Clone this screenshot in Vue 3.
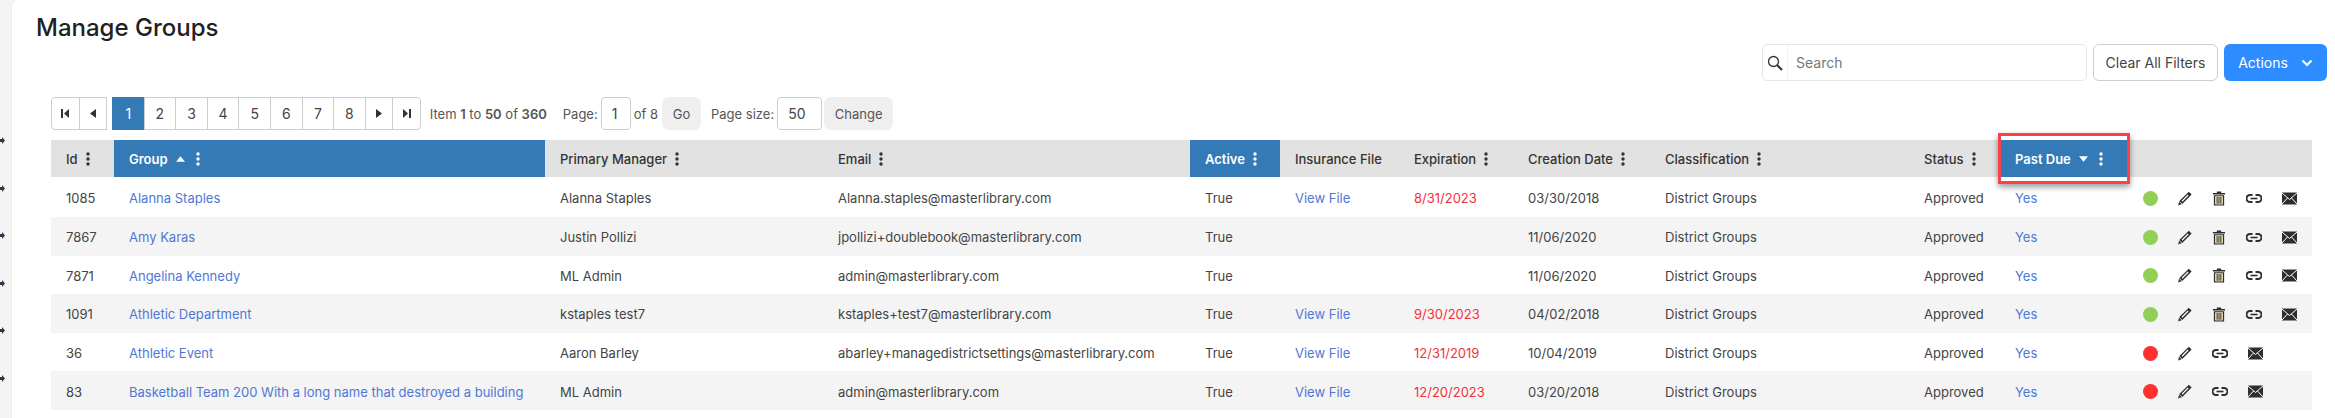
<template>
  <div class="page">
    <div class="rail">
      <svg v-for="n in 6" :key="n" class="rail-mark" viewBox="0 0 5 7"><path d="M0 2h2V0l3 3.500L2 7V5H0z" /></svg>
    </div>
    <div class="card">
      <h1>Manage Groups</h1>
      <div class="toolbar">
        <div class="search">
          <span class="search-icon">
            <svg width="16" height="16" viewBox="0 0 16 16" fill="none" stroke="#333" stroke-width="1.3">
              <circle cx="6.500" cy="6.500" r="5" />
              <path d="M10.200 10.200L15 15" stroke-width="2" />
            </svg>
          </span>
          <input class="search-input" placeholder="Search" />
        </div>
        <button class="btn-clear">Clear All Filters</button>
        <button class="btn-actions">
          Actions
          <svg width="12" height="8" viewBox="0 0 12 8" fill="none" stroke="#fff" stroke-width="2.200"><path d="M1.500 1.500L6 6l4.500-4.500" /></svg>
        </button>
      </div>
      <div class="content">
        <div class="pager">
          <div class="pager-group nav-start">
            <a class="pg nav">
              <svg width="8" height="9" viewBox="0 0 8 9"><path d="M0 0h2v9H0zM8 0v9L3 4.500z" /></svg>
            </a>
            <a class="pg nav">
              <svg width="6" height="9" viewBox="0 0 6 9"><path d="M6 0v9L0 4.500z" /></svg>
            </a>
          </div>
          <div class="pager-group nav-end">
            <a v-for="p in 8" :key="p" class="pg num" :class="{ on: p === 1 }">{{ p }}</a>
            <a class="pg nav">
              <svg width="6" height="9" viewBox="0 0 6 9"><path d="M0 0v9l6-4.500z" /></svg>
            </a>
            <a class="pg nav">
              <svg width="8" height="9" viewBox="0 0 8 9"><path d="M0 0v9l5-4.500zM6 0h2v9H6z" /></svg>
            </a>
          </div>
          <span class="info">Item <b>1</b> to <b>50</b> of <b>360</b></span>
          <span class="page-label">Page:</span>
          <input class="box box-page" value="1" />
          <span class="of">of 8</span>
          <button class="btn-soft btn-go">Go</button>
          <span class="size-label">Page size:</span>
          <input class="box box-size" value="50" />
          <button class="btn-soft btn-change">Change</button>
        </div>

        <div class="table">
          <div class="row head">
            <div v-for="c in columns" :key="c.label" class="cell" :class="{ sorted: c.sorted }">
              <span>{{ c.label }}</span>
              <svg v-if="c.sort === 'up'" class="sort" width="9" height="6" viewBox="0 0 10 6"><path d="M5 0l5 6H0z" /></svg>
              <svg v-if="c.sort === 'down'" class="sort" width="9" height="6" viewBox="0 0 10 6"><path d="M0 0h10L5 6z" /></svg>
              <svg v-if="c.menu" class="kebab" width="4" height="14" viewBox="0 0 4 14">
                <circle cx="2" cy="2" r="1.700" /><circle cx="2" cy="7" r="1.700" /><circle cx="2" cy="12" r="1.700" />
              </svg>
            </div>
            <div class="cell"></div>
          </div>
          <div v-for="r in rows" :key="r.id" class="row body">
            <div class="cell">{{ r.id }}</div>
            <div class="cell"><a class="link">{{ r.group }}</a></div>
            <div class="cell">{{ r.manager }}</div>
            <div class="cell">{{ r.email }}</div>
            <div class="cell">True</div>
            <div class="cell"><a v-if="r.expiration" class="link">View File</a></div>
            <div class="cell late">{{ r.expiration }}</div>
            <div class="cell">{{ r.created }}</div>
            <div class="cell">District Groups</div>
            <div class="cell">Approved</div>
            <div class="cell"><a class="link">Yes</a></div>
            <div class="cell icons">
              <span class="dot" :class="r.ok ? 'green' : 'red'"></span>
              <svg class="ico pencil" viewBox="0 0 15 15">
                <path fill="#2e2e2e" d="M11.600.300l3 3L4.600 13.300l-3.200-3.100z" />
                <path fill="#fff" d="M10.400 3.300l.9.900-6.600 6.700-.9-.900z" />
                <path fill="#5a3220" d="M1.100 10.700l3 3-4 1.200z" />
              </svg>
              <svg v-if="r.ok" class="ico trash" viewBox="0 0 15 15">
                <path fill="#2e2e2e" d="M5.200 0h4.600v1.500H14v1.700H1V1.500h4.200z" />
                <path fill="#2e2e2e" d="M2 4h11v11H2zm1.500 1.300v8.400h8V5.300z" />
                <path fill="#e6d9a8" d="M3.500 5.300h8v8.400h-8z" />
                <path fill="#2e2e2e" d="M5 5.800h1v7.400H5zM7 5.800h1v7.400H7zM9 5.800h1v7.400H9z" />
              </svg>
              <svg class="ico chain" viewBox="0 0 16 9" fill="none" stroke="#2e2e2e" stroke-width="2">
                <path d="M6.500 1H4a3.500 3.500 0 0 0 0 7h2.500" />
                <path d="M9.500 1H12a3.500 3.500 0 0 1 0 7H9.500" />
                <path d="M4.500 4.500h7" stroke-width="1.600" />
              </svg>
              <svg class="ico" viewBox="0 0 15 12">
                <path fill="#2e2e2e" d="M0 0h15v12H0z" />
                <path fill="none" stroke="#fff" stroke-width="1" d="M0 .5l7.500 6.500L15 .5M0 11.500l5.500-6M15 11.500l-5.500-6" />
              </svg>
            </div>
          </div>
          <div class="callout"></div>
        </div>
      </div>
    </div>
  </div>
</template>

<script setup>
const columns = [
  { label: 'Id', menu: true },
  { label: 'Group', menu: true, sorted: true, sort: 'up' },
  { label: 'Primary Manager', menu: true },
  { label: 'Email', menu: true },
  { label: 'Active', menu: true, sorted: true },
  { label: 'Insurance File' },
  { label: 'Expiration', menu: true },
  { label: 'Creation Date', menu: true },
  { label: 'Classification', menu: true },
  { label: 'Status', menu: true },
  { label: 'Past Due', menu: true, sorted: true, sort: 'down' }
]

const rows = [
  { id: 1085, group: 'Alanna Staples', manager: 'Alanna Staples', email: 'Alanna.staples@masterlibrary.com', expiration: '8/31/2023', created: '03/30/2018', ok: true },
  { id: 7867, group: 'Amy Karas', manager: 'Justin Pollizi', email: 'jpollizi+doublebook@masterlibrary.com', expiration: '', created: '11/06/2020', ok: true },
  { id: 7871, group: 'Angelina Kennedy', manager: 'ML Admin', email: 'admin@masterlibrary.com', expiration: '', created: '11/06/2020', ok: true },
  { id: 1091, group: 'Athletic Department', manager: 'kstaples test7', email: 'kstaples+test7@masterlibrary.com', expiration: '9/30/2023', created: '04/02/2018', ok: true },
  { id: 36, group: 'Athletic Event', manager: 'Aaron Barley', email: 'abarley+managedistrictsettings@masterlibrary.com', expiration: '12/31/2019', created: '10/04/2019', ok: false },
  { id: 83, group: 'Basketball Team 200 With a long name that destroyed a building', manager: 'ML Admin', email: 'admin@masterlibrary.com', expiration: '12/20/2023', created: '03/20/2018', ok: false }
]
</script>

<style>
html, body {
  margin: 0;
  background: #f4f4f4;
  overflow: hidden;
}
</style>

<style scoped>
.page {
  display: flex;
  height: 418px;
  font-family: Inter, "Liberation Sans", sans-serif;
  font-size: 13px;
  color: #444;
  overflow: hidden;
}

.rail {
  width: 11px;
  flex: none;
  display: flex;
  flex-direction: column;
  align-items: flex-start;
  gap: 40.500px;
  padding-top: 137px;
  box-sizing: border-box;
}

.rail-mark {
  width: 5px;
  height: 7px;
  fill: #2b3a4a;
}

.card {
  flex: 1;
  min-width: 0;
  background: #fff;
  border-left: 1px solid #ececec;
  border-top-left-radius: 8px;
  padding: 13px 8px 0 24px;
}

h1 {
  margin: 0;
  font-size: 24px;
  line-height: 29px;
  font-weight: 500;
  color: #212121;
}

.toolbar {
  display: flex;
  justify-content: flex-end;
  gap: 6px;
  margin-top: 2px;
  height: 37px;
}

.search {
  display: flex;
  width: 325px;
  box-sizing: border-box;
  border: 1px solid #e6e6e6;
  border-radius: 5px;
}

.search-icon {
  width: 24px;
  flex: none;
  display: flex;
  align-items: center;
  justify-content: center;
}

.search-input {
  flex: 1;
  min-width: 0;
  border: 0;
  border-left: 1px solid #f2f2f2;
  outline: 0;
  padding: 0 8px;
  background: transparent;
  font: 14px Inter, "Liberation Sans", sans-serif;
  color: #444;
}

.search-input::placeholder {
  color: #777;
  opacity: 1;
}

.btn-clear {
  width: 125px;
  border: 1px solid #cfcfcf;
  border-radius: 6px;
  background: #fff;
  font: 14px Inter, "Liberation Sans", sans-serif;
  color: #444;
  padding: 0;
}

.btn-actions {
  width: 103px;
  border: 0;
  border-radius: 6px;
  background: #2d8cff;
  color: #fff;
  font: 14px Inter, "Liberation Sans", sans-serif;
  display: flex;
  align-items: center;
  justify-content: center;
  gap: 13px;
  padding: 0;
}

.content {
  padding: 16px 15px 0 15px;
}

.pager {
  display: flex;
  align-items: center;
  height: 33px;
  color: #555;
}

.pager-group {
  display: flex;
  height: 100%;
}

.nav-start {
  margin-right: 5px;
}

.pg {
  box-sizing: border-box;
  height: 33px;
  display: flex;
  align-items: center;
  justify-content: center;
  border: 1px solid #ccc;
  margin-left: -1px;
  color: #444;
  font-size: 14px;
}

.pg.nav {
  width: 28.500px;
}

.pg.nav svg {
  fill: #333;
}

.pg.num {
  width: 32.600px;
}

.pg.on {
  background: #337ab7;
  border-color: #337ab7;
  color: #fff;
}

.nav-start .pg:first-child {
  margin-left: 0;
  border-radius: 4px 0 0 4px;
}

.nav-end .pg:first-child {
  margin-left: 0;
}

.nav-end .pg:last-child {
  border-radius: 0 4px 4px 0;
}

.info {
  margin-left: 9px;
}

.info b {
  font-weight: 600;
}

.page-label {
  margin-left: 16px;
  margin-right: 3px;
}

.box {
  box-sizing: border-box;
  height: 33px;
  border: 1px solid #ccc;
  border-radius: 4px;
  outline: 0;
  background: #fff;
  font: 14px Inter, "Liberation Sans", sans-serif;
  color: #444;
  padding: 0 0 0 10px;
}

.box-page {
  width: 30px;
}

.box-size {
  width: 45px;
}

.of {
  margin-left: 3px;
}

.btn-soft {
  height: 33px;
  border: 0;
  border-radius: 7px;
  background: #efefef;
  color: #555;
  font: 13px Inter, "Liberation Sans", sans-serif;
  padding: 0;
}

.btn-go {
  width: 39px;
  margin-left: 4px;
}

.size-label {
  margin-left: 10px;
  margin-right: 3px;
}

.btn-change {
  width: 69px;
  margin-left: 2px;
}

.table {
  position: relative;
  margin-top: 10px;
}

.row {
  display: grid;
  grid-template-columns: 63px 431px 278px 367px 90px 119px 114px 137px 259px 91px 128px 184px;
}

.cell {
  display: flex;
  align-items: center;
  min-width: 0;
  padding-left: 15px;
  white-space: nowrap;
}

.head {
  height: 37px;
  background: #e2e2e2;
  color: #333;
  font-weight: 500;
}

.head .cell {
  gap: 8px;
}

.kebab {
  fill: #333;
}

.head .sorted {
  background: #337ab7;
  color: #fff;
  font-weight: 600;
}

.sorted .sort {
  fill: #fff;
  margin-right: 3px;
}

.sorted .kebab {
  fill: #fff;
}

.body {
  height: 38.600px;
}

.head + .body {
  height: 40px;
}

.body .cell {
  padding-top: 2px;
}

.body:nth-child(odd) {
  background: #f4f4f4;
}

.link {
  color: #4f78d6;
}

.late {
  color: #f5303a;
}

.icons {
  gap: 20px;
}

.dot {
  width: 15px;
  height: 15px;
  flex: none;
  border-radius: 50%;
}

.green {
  background: #92cf56;
}

.red {
  background: #ff3030;
}

.ico {
  width: 15px;
  height: 15px;
  flex: none;
}

.pencil,
.trash {
  width: 14px;
}

.chain {
  width: 16px;
}

.callout {
  position: absolute;
  left: 1947px;
  top: -7px;
  width: 132px;
  height: 51px;
  box-sizing: border-box;
  border: 3px solid #f8424a;
  box-shadow: 0 3px 6px rgba(0, 0, 0, 0.4);
  pointer-events: none;
}
</style>
